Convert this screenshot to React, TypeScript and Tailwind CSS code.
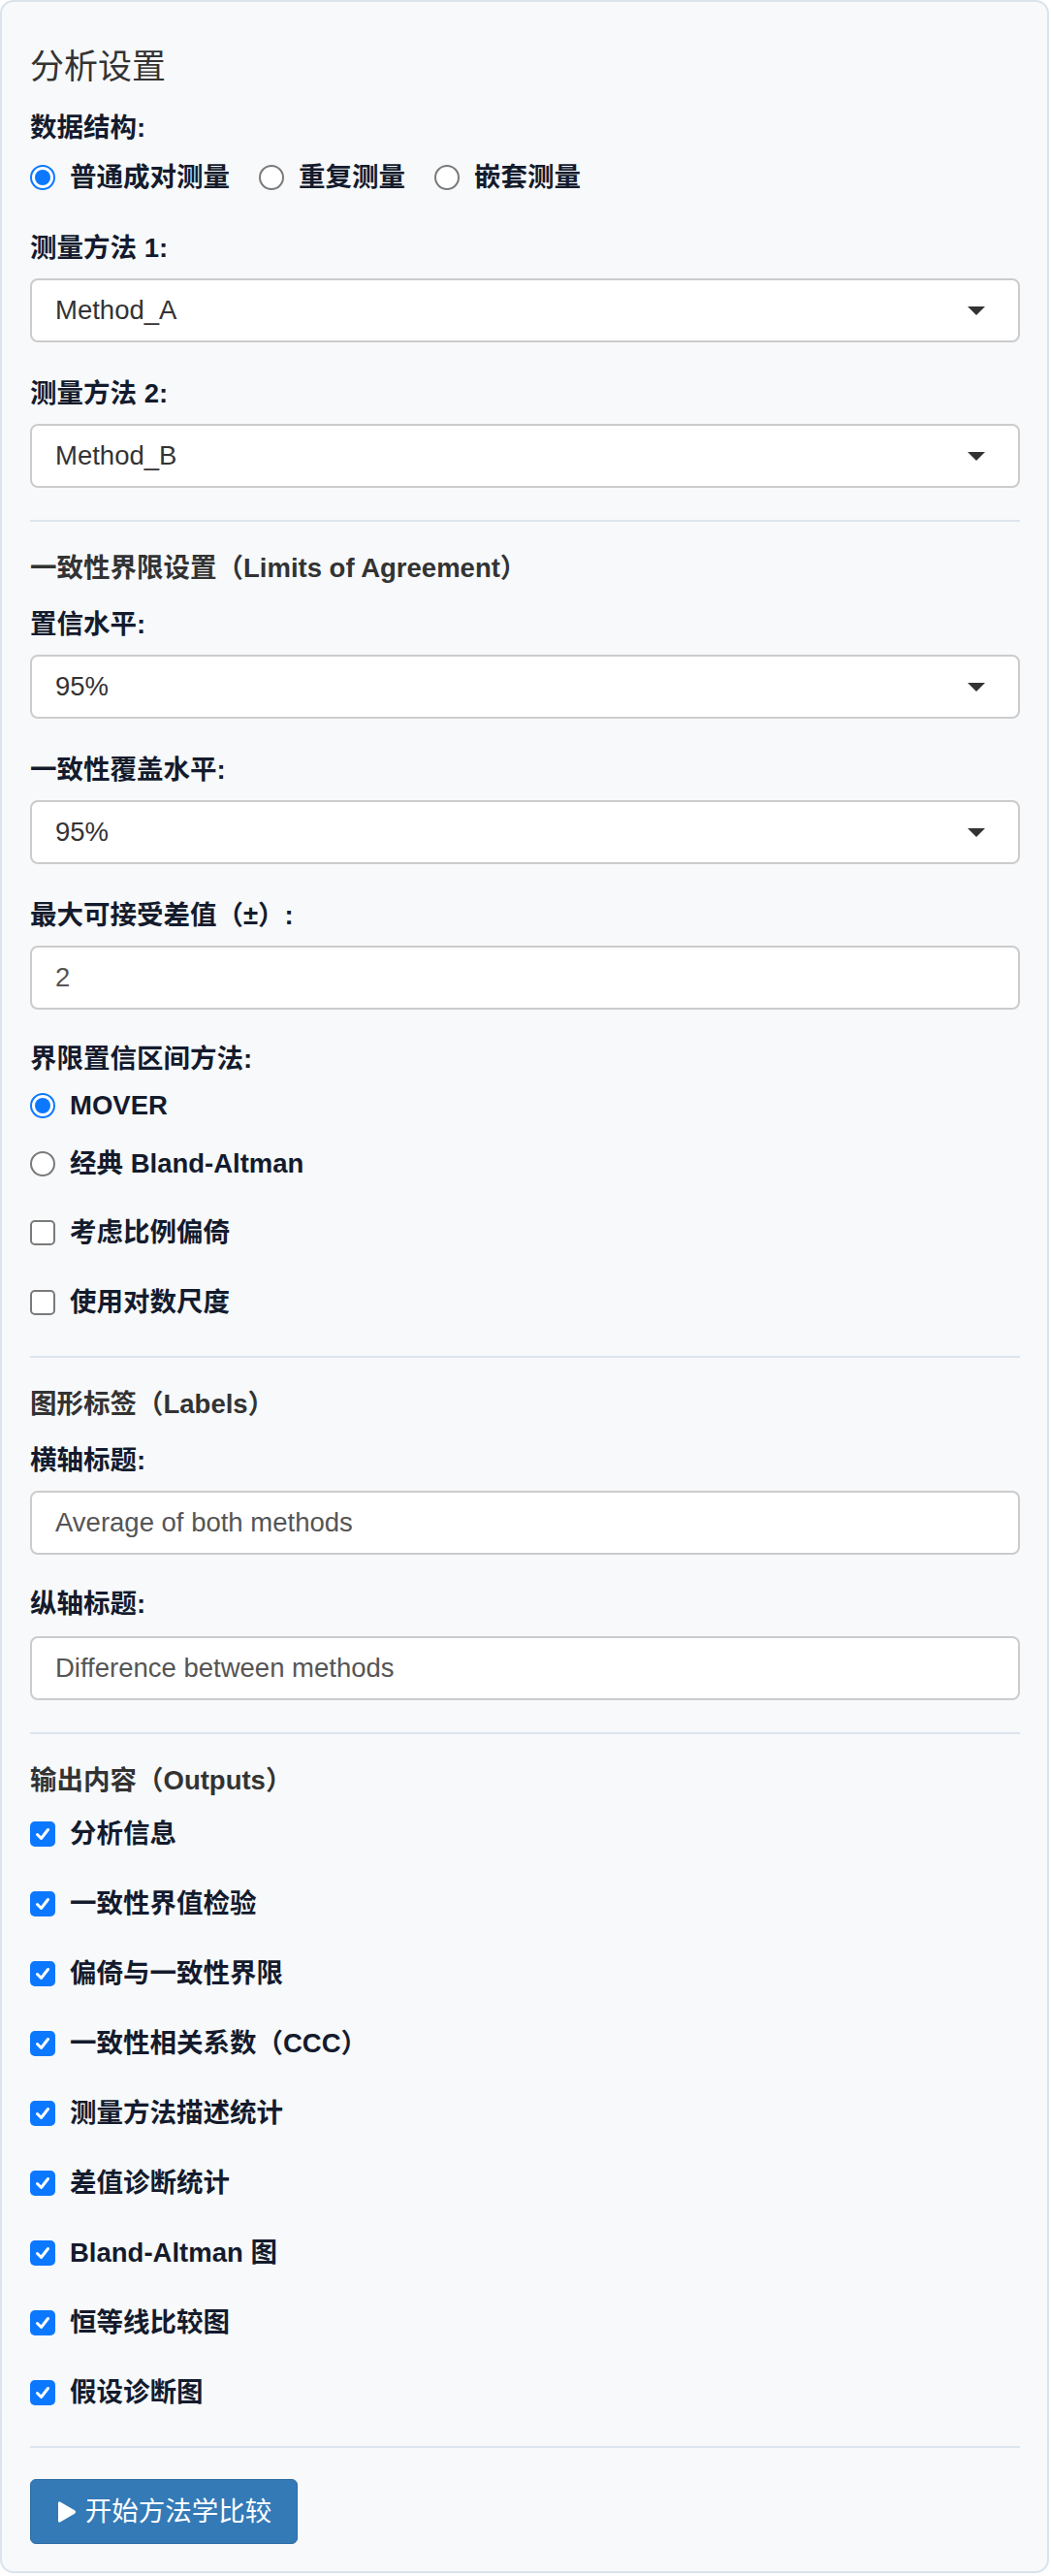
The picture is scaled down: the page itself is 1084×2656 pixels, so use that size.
import React from "react";

const FONT = {
  fontFamily: '"Liberation Sans", "Noto Sans CJK SC", sans-serif',
};

const outputs = [
  { label: "分析信息", mt: "mt-[25px]" },
  { label: "一致性界值检验", mt: "mt-[42px]" },
  { label: "偏倚与一致性界限", mt: "mt-[42px]" },
  { label: "一致性相关系数（CCC）", mt: "mt-[42px]" },
  { label: "测量方法描述统计", mt: "mt-[42px]" },
  { label: "差值诊断统计", mt: "mt-[42px]" },
  { label: "Bland-Altman 图", mt: "mt-[42px]" },
  { label: "恒等线比较图", mt: "mt-[42px]" },
  { label: "假设诊断图", mt: "mt-[42px]" },
];

function Label({ children, className = "" }: { children: React.ReactNode; className?: string }) {
  return (
    <div className={`h-[30px] leading-[30px] text-[27.5px] font-bold text-[#141b2d] whitespace-nowrap ${className}`}>
      {children}
    </div>
  );
}

function Header({ children, className = "" }: { children: React.ReactNode; className?: string }) {
  return (
    <div className={`h-[30px] leading-[30px] text-[27.5px] font-bold text-[#333333] whitespace-nowrap ${className}`}>
      {children}
    </div>
  );
}

function Divider({ className = "" }: { className?: string }) {
  return <div className={`h-[2px] w-full bg-[#dde5ee] ${className}`} />;
}

function Select({ value, className = "" }: { value: string; className?: string }) {
  return (
    <div
      className={`flex h-[66px] w-full items-center rounded-[8px] border-2 border-[#cccccc] bg-white pl-[24px] pr-[34px] ${className}`}
    >
      <span className="text-[27.5px] text-[#333333]">{value}</span>
      <svg className="ml-auto" width="18" height="9" viewBox="0 0 18 9">
        <path d="M0 0 L18 0 L9 9 Z" fill="#333333" />
      </svg>
    </div>
  );
}

function TextInput({ value, className = "" }: { value: string; className?: string }) {
  return (
    <div
      className={`flex h-[66px] w-full items-center rounded-[8px] border-2 border-[#cccccc] bg-white pl-[24px] ${className}`}
    >
      <span className="text-[27.5px] text-[#555555]">{value}</span>
    </div>
  );
}

function Radio({ checked }: { checked: boolean }) {
  return checked ? (
    <span className="flex h-[26px] w-[26px] shrink-0 items-center justify-center rounded-full border-2 border-[#0b78ff] bg-white">
      <span className="h-[16px] w-[16px] rounded-full bg-[#0b78ff]" />
    </span>
  ) : (
    <span className="h-[26px] w-[26px] shrink-0 rounded-full border-2 border-[#7a7a7a] bg-white" />
  );
}

function Checkbox({ checked }: { checked: boolean }) {
  return checked ? (
    <span className="flex h-[26px] w-[26px] shrink-0 items-center justify-center rounded-[5px] bg-[#0b78ff]">
      <svg width="18" height="18" viewBox="0 0 18 18">
        <path d="M3.5 9.5 L7.5 13.5 L14.5 4.5" fill="none" stroke="white" strokeWidth="3" strokeLinecap="round" strokeLinejoin="round" />
      </svg>
    </span>
  ) : (
    <span className="h-[26px] w-[26px] shrink-0 rounded-[5px] border-2 border-[#7a7a7a] bg-white" />
  );
}

function Option({
  control,
  children,
  className = "",
}: {
  control: React.ReactNode;
  children: React.ReactNode;
  className?: string;
}) {
  return (
    <div className={`flex h-[30px] items-center gap-[15px] ${className}`}>
      {control}
      <span className="text-[27.5px] font-bold leading-[30px] text-[#141b2d] whitespace-nowrap">{children}</span>
    </div>
  );
}

export default function App() {
  return (
    <div style={FONT} className="bg-white">
      <div className="flex w-[1082px] flex-col rounded-[14px] border-2 border-[#dbe3ec] bg-[#f7f9fb] pb-[28px] pl-[29px] pr-[28px] pt-[47px]">
        <h4 className="h-[40px] text-[35px] font-normal leading-[40px] text-[#333333]">分析设置</h4>

        <Label className="mt-[28px]">数据结构:</Label>
        <div className="mt-[21px] flex items-center gap-[30px]">
          <Option control={<Radio checked />}>普通成对测量</Option>
          <Option control={<Radio checked={false} />}>重复测量</Option>
          <Option control={<Radio checked={false} />}>嵌套测量</Option>
        </div>

        <Label className="mt-[43px]">测量方法 1:</Label>
        <Select className="mt-[16px]" value="Method_A" />
        <Label className="mt-[38px]">测量方法 2:</Label>
        <Select className="mt-[16px]" value="Method_B" />

        <Divider className="mt-[33px]" />

        <Header className="mt-[33px]">一致性界限设置（Limits of Agreement）</Header>
        <Label className="mt-[28px]">置信水平:</Label>
        <Select className="mt-[16px]" value="95%" />
        <Label className="mt-[38px]">一致性覆盖水平:</Label>
        <Select className="mt-[16px]" value="95%" />
        <Label className="mt-[38px]">最大可接受差值（±）:</Label>
        <TextInput className="mt-[16px]" value="2" />

        <Label className="mt-[36px]">界限置信区间方法:</Label>
        <Option className="mt-[18px]" control={<Radio checked />}>MOVER</Option>
        <Option className="mt-[30px]" control={<Radio checked={false} />}>经典 Bland-Altman</Option>
        <Option className="mt-[41px]" control={<Checkbox checked={false} />}>考虑比例偏倚</Option>
        <Option className="mt-[42px]" control={<Checkbox checked={false} />}>使用对数尺度</Option>

        <Divider className="mt-[40px]" />

        <Header className="mt-[33px]">图形标签（Labels）</Header>
        <Label className="mt-[28px]">横轴标题:</Label>
        <TextInput className="mt-[16px]" value="Average of both methods" />
        <Label className="mt-[36px]">纵轴标题:</Label>
        <TextInput className="mt-[18px]" value="Difference between methods" />

        <Divider className="mt-[33px]" />

        <Header className="mt-[33px]">输出内容（Outputs）</Header>
        {outputs.map((o) => (
          <Option key={o.label} className={o.mt} control={<Checkbox checked />}>
            {o.label}
          </Option>
        ))}

        <Divider className="mt-[40px]" />

        <button className="mt-[32px] flex h-[67px] w-[276px] items-center justify-center gap-[9px] rounded-[6px] border border-[#2e6da4] bg-[#337ab7] text-[27.5px] text-white">
          <svg width="21" height="24" viewBox="0 0 21 24">
            <path
              d="M2 3 Q2 0.5 4.3 1.8 L19 10.3 Q21 12 19 13.7 L4.3 22.2 Q2 23.5 2 21 Z"
              fill="white"
            />
          </svg>
          <span>开始方法学比较</span>
        </button>
      </div>
    </div>
  );
}
